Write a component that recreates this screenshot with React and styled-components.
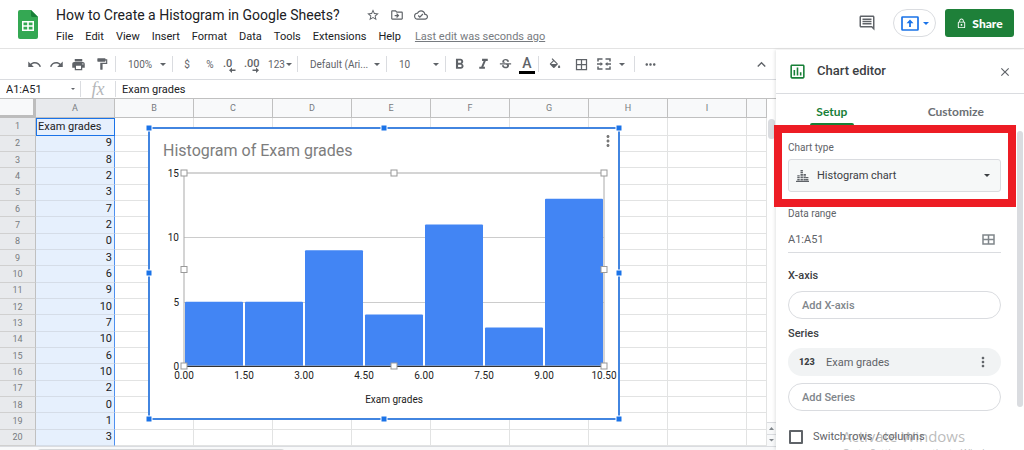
import React, { useState } from "react";
import styled, { createGlobalStyle } from "styled-components";
import {
  MdUndo,
  MdRedo,
  MdPrint,
  MdFormatPaint,
  MdFormatBold,
  MdFormatItalic,
  MdStrikethroughS,
  MdBorderAll,
  MdMoreHoriz,
  MdMoreVert,
  MdKeyboardArrowUp,
  MdStarBorder,
  MdOutlineDriveFileMove,
  MdOutlineCloudDone,
  MdOutlineComment,
  MdOutlineLock,
  MdClose,
  MdOutlineInsertChart,
} from "react-icons/md";

const GlobalStyle = createGlobalStyle`
  * {
    box-sizing: border-box;
  }
  body {
    margin: 0;
    background: #fff;
    color: #202124;
    font-family: Roboto, "Liberation Sans", sans-serif;
    overflow: hidden;
  }
  button, input, select {
    font: inherit;
    color: inherit;
    background: none;
    border: 0;
    margin: 0;
    padding: 0;
  }
  svg {
    display: block;
    flex: none;
  }
`;

const Page = styled.div`
  display: flex;
  flex-direction: column;
  height: 100vh;
`;

const Header = styled.header`
  display: flex;
  align-items: center;
  flex: none;
  height: 49px;
  padding: 0 10px 0 18px;
  border-bottom: 1px solid #e3e3e3;
`;

const Titles = styled.div`
  flex: 1;
  padding: 2px 0 0 18px;
`;

const TitleRow = styled.div`
  display: flex;
  align-items: center;
  gap: 10px;
  height: 22px;
  color: #5f6368;
`;

const Title = styled.h1`
  margin: 0 16px 0 0;
  font-size: 14px;
  font-weight: 400;
  color: #202124;
`;

const MenuBar = styled.nav`
  display: flex;
  align-items: center;
  gap: 12px;
  height: 20px;
  font-size: 11px;
`;

const LastEdit = styled.a`
  margin-left: 2px;
  font-size: 11px;
  color: #777b80;
  text-decoration: underline;
`;

const HeaderActions = styled.div`
  display: flex;
  align-items: center;
  padding-bottom: 2px;
  color: #5f6368;
`;

const PresentButton = styled.button`
  display: flex;
  align-items: center;
  justify-content: center;
  gap: 4px;
  width: 43px;
  height: 28px;
  margin: 0 9px 0 17px;
  border: 1px solid #dadce0;
  border-radius: 14px;
  color: #1a73e8;
`;

const ShareButton = styled.button`
  display: flex;
  align-items: center;
  justify-content: center;
  gap: 5px;
  width: 69px;
  height: 28px;
  border-radius: 3px;
  background: #1e8039;
  color: #fff;
  font-family: Lato, Roboto, sans-serif;
  font-size: 12px;
  font-weight: 900;
`;

const Body = styled.div`
  display: flex;
  flex: 1;
  min-height: 0;
`;

const Main = styled.main`
  display: flex;
  flex-direction: column;
  flex: 1;
  min-width: 0;
`;

const Toolbar = styled.div`
  display: flex;
  align-items: center;
  flex: none;
  height: 31px;
  padding: 0 6px 0 23px;
  border-bottom: 1px solid #dadce0;
  color: #5f6368;
  font-size: 10px;
`;

const Tool = styled.button`
  display: flex;
  align-items: center;
  justify-content: center;
  gap: 1px;
  flex: none;
  width: ${(props) => props.$width || 22}px;
  height: 24px;
`;

const Separator = styled.span`
  width: 1px;
  height: 16px;
  background: #dadce0;
`;

const Spacer = styled.span`
  flex: 1;
`;

const SelectBox = styled.label`
  display: flex;
  align-items: center;
  flex: none;
  width: ${(props) => props.$width}px;
  padding: 0 6px 0 12px;
`;

const Select = styled.select`
  appearance: none;
  flex: 1;
  min-width: 0;
  outline: none;
`;

const TextColor = styled.span`
  width: 16px;
  border-bottom: 3px solid #000;
  font-size: 14px;
  font-weight: 500;
  line-height: 16px;
`;

const FormulaBar = styled.div`
  display: flex;
  align-items: center;
  flex: none;
  height: 18px;
  font-size: 11px;
`;

const NameBox = styled.label`
  display: flex;
  align-items: center;
  width: 80px;
  padding: 0 5px 0 6px;
  color: #5f6368;
`;

const TextInput = styled.input`
  flex: 1;
  min-width: 0;
  color: ${(props) => props.$color || "#202124"};
  outline: none;
`;

const FormulaInput = styled(TextInput)`
  padding-left: 6px;
`;

const Fx = styled.span`
  width: 34px;
  text-align: center;
  font-family: "Liberation Serif", serif;
  font-style: italic;
  font-size: 18px;
  line-height: 16px;
  color: #b4b6b9;
`;

const SheetArea = styled.div`
  position: relative;
  display: flex;
  flex: 1;
  min-height: 0;
`;

const Sheet = styled.table`
  flex: 1;
  min-width: 0;
  height: 100%;
  table-layout: fixed;
  border-collapse: separate;
  border-spacing: 0;
  font-size: 11px;
  line-height: 12px;
  border-top: 1px solid #c0c0c0;
`;

const ColumnHead = styled.th`
  width: ${(props) => (props.$last ? "auto" : "79px")};
  height: 19px;
  padding: 0;
  border-right: 1px solid #c0c0c0;
  border-bottom: 1px solid #c0c0c0;
  background: ${(props) => (props.$active ? "#e8eaed" : "#f8f9fa")};
  color: #777b80;
  font-size: 9px;
  font-weight: 400;
`;

const Corner = styled.th`
  width: 36px;
  padding: 0;
  border-right: 3px solid #bdbdbd;
  border-bottom: 3px solid #bdbdbd;
  background: #f8f9fa;
`;

const RowHead = styled.th`
  padding: 0;
  border-right: 1px solid #c0c0c0;
  border-bottom: 1px solid #d0d0d0;
  background: #e8eaed;
  color: #777b80;
  font-size: 9px;
  font-weight: 400;
`;

const Cell = styled.td`
  padding: 0;
  border-right: 1px solid #e2e3e3;
  border-bottom: 1px solid #e2e3e3;
`;

const DataCell = styled(Cell)`
  padding: 0 2px;
  background: #e6f0fd;
  border-right-color: #4d90f0;
  border-bottom-color: #d5dde8;
  text-align: right;
`;

const LabelCell = styled(DataCell)`
  padding: 0 1px;
  border: 1px solid #1a73e8;
  text-align: left;
`;

const ChartFrame = styled.section`
  position: absolute;
  left: 148px;
  top: 29px;
  width: 472px;
  height: 293px;
  border: 2px solid #4285e0;
  background: #fff;
`;

const ChartMenu = styled.button`
  position: absolute;
  top: 3px;
  right: 1px;
  color: #777;
`;

const VerticalScroll = styled.div`
  display: flex;
  flex-direction: column;
  justify-content: space-between;
  flex: none;
  width: 9px;
  padding-top: 20px;
  border-top: 1px solid #c0c0c0;
  background: #fff;
`;

const ScrollThumb = styled.div`
  width: 7px;
  height: 20px;
  margin-left: 1px;
  border-radius: 4px;
  background: #dadce0;
`;

const ScrollButton = styled.button`
  display: flex;
  align-items: center;
  justify-content: center;
  width: 9px;
  height: 12px;
  border-top: 1px solid #dadce0;
  background: #f8f9fa;
  color: #80868b;
`;

const BottomScroll = styled.div`
  flex: none;
  height: 4px;
  padding: 2px 0 0 37px;
  border-top: 1px solid #dadce0;
  background: #f8f9fa;

  &::before {
    content: "";
    display: block;
    width: 248px;
    height: 4px;
    border-radius: 4px 4px 0 0;
    background: #d5d6d8;
  }
`;

const Panel = styled.aside`
  position: relative;
  flex: none;
  width: 248px;
  margin-top: 1px;
  background: #fff;
  box-shadow: -1px 0 3px rgba(60, 64, 67, 0.15);
  color: #3c4043;
`;

const PanelHeader = styled.div`
  display: flex;
  align-items: center;
  height: 44px;
  padding: 0 12px;
  border-bottom: 1px solid #dadce0;
  color: #5f6368;
`;

const PanelTitle = styled.h2`
  flex: 1;
  margin: 0 0 0 10px;
  padding-bottom: 2px;
  font-size: 13px;
  font-weight: 500;
  color: #3c4043;
`;

const Tabs = styled.div`
  display: flex;
  height: 31px;
`;

const Tab = styled.button`
  position: relative;
  width: ${(props) => (props.$active ? 45 : 55)}%;
  padding-top: 4px;
  font-family: Lato, Roboto, sans-serif;
  font-size: 12px;
  font-weight: 700;
  color: ${(props) => (props.$active ? "#188038" : "#6b6f74")};

  &::after {
    content: "";
    display: ${(props) => (props.$active ? "block" : "none")};
    position: absolute;
    left: calc(50% - 22px);
    bottom: 0;
    width: 44px;
    height: 2px;
    border-radius: 2px 2px 0 0;
    background: #188038;
  }
`;

const PanelBody = styled.div`
  display: flex;
  flex-direction: column;
  padding: 0 23px 0 12px;
  font-size: 11px;
`;

const Highlight = styled.div`
  margin: 0 -15px 0 -14px;
  padding: 8px 7px 7px 6px;
  border: 8px solid #ed1c24;
  z-index: 1;
`;

const FieldLabel = styled.label`
  display: block;
  height: 14px;
  font-size: 10px;
  line-height: 14px;
  color: #5f6368;
`;

const TypeSelect = styled.div`
  display: flex;
  align-items: center;
  gap: 8px;
  height: 33px;
  margin-top: 4px;
  padding: 0 10px 0 7px;
  border: 1px solid #dadce0;
  border-radius: 3px;
  background: #f6f8f8;
`;

const RangeField = styled.div`
  display: flex;
  align-items: center;
  height: 27px;
  margin: 5px 0 15px;
  padding-right: 6px;
  border-bottom: 1px solid #dadce0;
  color: #80868b;
`;

const GroupTitle = styled.h3`
  margin: 0;
  font-size: 11px;
  font-weight: 500;
  line-height: 16px;
`;

const Pill = styled.button`
  height: 28px;
  margin: 7px 0;
  padding: 0 13px;
  border: 1px solid #dadce0;
  border-radius: 14px;
  font-weight: 500;
  text-align: left;
  color: #80868b;
`;

const SeriesItem = styled.div`
  display: flex;
  align-items: center;
  height: 28px;
  margin-top: 6px;
  padding: 0 10px 0 11px;
  border-radius: 14px;
  background: #f1f3f4;
  color: #5f6368;
`;

const SeriesKind = styled.span`
  width: 27px;
  font-size: 9px;
  font-weight: 900;
  color: #3c4043;
`;

const SeriesName = styled.span`
  flex: 1;
`;

const CheckRow = styled.label`
  display: flex;
  align-items: center;
  gap: 10px;
  margin-top: 12px;
  line-height: 14px;
  color: #5f6368;
`;

const Checkbox = styled.input`
  appearance: none;
  width: 14px;
  height: 14px;
  margin-left: 1px;
  border: 2px solid #5f6368;
  border-radius: 1px;
`;

const PanelScroll = styled.div`
  position: absolute;
  top: 81px;
  right: 1px;
  width: 6px;
  height: 276px;
  border-radius: 3px;
  background: #dadce0;
`;

const Watermark = styled.div`
  position: absolute;
  left: 66px;
  top: 376px;
  font-family: "Open Sans", sans-serif;
  font-size: 15px;
  line-height: 20px;
  color: rgba(120, 120, 120, 0.5);
  pointer-events: none;
  white-space: nowrap;

  small {
    display: block;
    font-size: 10px;
    line-height: 14px;
  }
`;

const menus = ["File", "Edit", "View", "Insert", "Format", "Data", "Tools", "Extensions", "Help"];
const columns = ["A", "B", "C", "D", "E", "F", "G", "H", "I", ""];
const grades = [9, 8, 2, 3, 7, 2, 0, 3, 6, 9, 10, 7, 10, 6, 10, 2, 0, 1, 3];
const bins = [5, 5, 9, 4, 11, 3, 13];

const Caret = ({ size = 6 }) => (
  <svg width={size} height={size / 2} viewBox="0 0 6 3" fill="currentColor">
    <path d="M0 0h6L3 3z" />
  </svg>
);

const SheetsLogo = () => (
  <svg width="20" height="29" viewBox="0 0 20 29">
    <path d="M2 0h11l7 7v20a2 2 0 0 1-2 2H2a2 2 0 0 1-2-2V2a2 2 0 0 1 2-2z" fill="#34a853" />
    <path d="M13 0l7 7h-5.500a1.500 1.500 0 0 1-1.500-1.500z" fill="#188038" />
    <path
      d="M4 11h12v10H4zM5.500 12.500v2.700h3.700v-2.700zM10.800 12.500v2.700h3.700v-2.700zM5.500 16.800v2.700h3.700v-2.700zM10.800 16.800v2.700h3.700v-2.700z"
      fill="#fff"
      fillRule="evenodd"
    />
  </svg>
);

const PresentIcon = () => (
  <svg width="18" height="15" viewBox="0 0 18 15">
    <rect x="1" y="1" width="16" height="13" rx="0.500" fill="none" stroke="currentColor" strokeWidth="1.700" />
    <path d="M9 3.500l3.500 3.700h-2.600V11H8.100V7.200H5.500z" fill="currentColor" />
  </svg>
);

const FillIcon = () => (
  <svg width="14" height="14" viewBox="0 -2 24 24" fill="currentColor">
    <path d="M16.560 8.940L7.620 0 6.210 1.410l2.380 2.380-5.150 5.150c-.590.590-.590 1.540 0 2.120l5.500 5.500c.290.290.680.440 1.060.440s.770-.150 1.060-.440l5.500-5.500c.590-.580.590-1.530 0-2.120zM5.210 10L10 5.210 14.790 10H5.210zM19 11.500s-2 2.170-2 3.500c0 1.100.900 2 2 2s2-.900 2-2c0-1.330-2-3.500-2-3.500z" />
  </svg>
);

const MergeIcon = () => (
  <svg width="14" height="12" viewBox="0 0 14 12" fill="none" stroke="currentColor" strokeWidth="1.500">
    <path d="M5.500 1H1v2.500M8.500 1H13v2.500M5.500 11H1V8.500M8.500 11H13V8.500M0 6h4.500M14 6H9.500" />
    <path d="M3.500 4L6 6 3.500 8zM10.500 4L8 6l2.500 2z" fill="currentColor" stroke="none" />
  </svg>
);

const DecimalIcon = ({ text, more }) => (
  <svg width="16" height="18" viewBox="0 0 16 18" fill="currentColor">
    <text x={more ? 0 : 1} y="12" fontSize="11" fontWeight="500">{text}</text>
    <path
      d={more ? "M8.500 14.500H12v-2l3 2.700-3 2.700v-2H8.500z" : "M13.500 14.500H10v-2l-3 2.700 3 2.700v-2h3.500z"}
    />
  </svg>
);

const HistogramIcon = () => (
  <svg width="13" height="12" viewBox="0 0 13 12" fill="none" stroke="#5f6368" strokeDasharray="1.700 0.700">
    <path d="M2.500 10.500V5M5.700 10.500V0M8.700 10.500V4M11.200 10.500V7" strokeWidth="2.400" />
    <path d="M0 11.400h13" strokeWidth="1.200" strokeDasharray="none" />
  </svg>
);

const RangeIcon = () => (
  <svg width="13" height="11" viewBox="0 0 13 11" fill="none" stroke="currentColor" strokeWidth="1.500">
    <path d="M1 1h11v9H1zM6.500 1v9M1 5.500h11" />
  </svg>
);

// coordinates are relative to the inside of the chart frame
const plot = { x: 34, y: 44, width: 420, height: 193 };
const yOf = (value) => plot.y + plot.height - (value * plot.height) / 15;

const Handles = ({ xs, ys, fill, stroke, size }) =>
  xs.flatMap((x, i) =>
    ys.map((y, j) =>
      i === 1 && j === 1 ? null : (
        <rect
          key={`${x}-${y}`}
          x={x - size / 2}
          y={y - size / 2}
          width={size}
          height={size}
          fill={fill}
          stroke={stroke}
        />
      )
    )
  );

const Histogram = () => {
  const right = plot.x + plot.width;
  const bottom = plot.y + plot.height;
  const step = plot.width / bins.length;
  return (
    <svg
      width="468"
      height="288"
      overflow="visible"
      fontSize="10"
      fontFamily="Roboto, sans-serif"
      fill="#222"
      role="img"
      aria-label="Histogram of Exam grades"
    >
      <text x="13" y="27" fontSize="16" fill="#7d7d7d">Histogram of Exam grades</text>
      {[5, 10].map((v) => (
        <path key={v} d={`M${plot.x} ${Math.round(yOf(v)) + 0.5}h${plot.width}`} stroke="#ccc" />
      ))}
      {[0, 5, 10, 15].map((v) => (
        <text key={v} x={plot.x - 5} y={yOf(v) + 4} textAnchor="end">{v}</text>
      ))}
      {bins.map((count, i) => (
        <path
          key={i}
          d={`M${plot.x + i * step + 1} ${bottom}V${yOf(count) + 1}q0-1 1-1h${step - 4}q1 0 1 1V${bottom}z`}
          fill="#4285f4"
        />
      ))}
      <rect x={plot.x} y={plot.y} width={plot.width} height={plot.height} fill="none" stroke="#aaa" />
      <path d={`M${plot.x} ${bottom + 0.5}h${plot.width}`} stroke="#333" />
      {bins.concat(0).map((_, i) => (
        <text key={i} x={plot.x + i * step} y={bottom + 13} textAnchor="middle">
          {(i * 1.5).toFixed(2)}
        </text>
      ))}
      <text x={plot.x + plot.width / 2} y="274" textAnchor="middle">Exam grades</text>
      <Handles
        xs={[plot.x, plot.x + plot.width / 2, right]}
        ys={[plot.y, plot.y + plot.height / 2, bottom]}
        fill="#fff"
        stroke="#999"
        size={6}
      />
      <Handles xs={[-1, 234, 469]} ys={[-1, 144, 290]} fill="#1a73e8" stroke="#fff" size={6} />
    </svg>
  );
};

const Spreadsheet = () => (
  <SheetArea>
    <Sheet>
      <thead>
        <tr>
          <Corner aria-label="Select all" />
          {columns.map((name, i) => (
            <ColumnHead key={i} $active={i === 0} $last={i === columns.length - 1}>{name}</ColumnHead>
          ))}
        </tr>
      </thead>
      <tbody>
        {["Exam grades", ...grades].map((value, row) => (
          <tr key={row}>
            <RowHead>{row + 1}</RowHead>
            {row === 0 ? <LabelCell>{value}</LabelCell> : <DataCell>{value}</DataCell>}
            {columns.slice(1).map((_, i) => (
              <Cell key={i} />
            ))}
          </tr>
        ))}
      </tbody>
    </Sheet>
    <VerticalScroll>
      <ScrollThumb />
      <div>
        <ScrollButton aria-label="Scroll up">
          <svg width="5" height="3" fill="currentColor"><path d="M0 3h5L2.500 0z" /></svg>
        </ScrollButton>
        <ScrollButton aria-label="Scroll down"><Caret size={5} /></ScrollButton>
      </div>
    </VerticalScroll>
    <ChartFrame>
      <Histogram />
      <ChartMenu aria-label="Chart menu"><MdMoreVert size={18} /></ChartMenu>
    </ChartFrame>
  </SheetArea>
);

const ChartEditor = () => {
  const [switched, setSwitched] = useState(false);
  const [range, setRange] = useState("A1:A51");
  return (
    <Panel>
      <PanelHeader>
        <MdOutlineInsertChart size={19} color="#188038" />
        <PanelTitle>Chart editor</PanelTitle>
        <button aria-label="Close"><MdClose size={14} /></button>
      </PanelHeader>
      <Tabs>
        <Tab $active>Setup</Tab>
        <Tab>Customize</Tab>
      </Tabs>
      <PanelBody>
        <Highlight>
          <FieldLabel htmlFor="chart-type">Chart type</FieldLabel>
          <TypeSelect>
            <HistogramIcon />
            <Select id="chart-type">
              <option>Histogram chart</option>
            </Select>
            <Caret />
          </TypeSelect>
        </Highlight>
        <FieldLabel htmlFor="data-range">Data range</FieldLabel>
        <RangeField>
          <TextInput
            id="data-range"
            $color="#5f6368"
            value={range}
            onChange={(event) => setRange(event.target.value)}
          />
          <RangeIcon />
        </RangeField>
        <GroupTitle>X-axis</GroupTitle>
        <Pill>Add X-axis</Pill>
        <GroupTitle>Series</GroupTitle>
        <SeriesItem>
          <SeriesKind>123</SeriesKind>
          <SeriesName>Exam grades</SeriesName>
          <button aria-label="Series options"><MdMoreVert size={16} /></button>
        </SeriesItem>
        <Pill>Add Series</Pill>
        <CheckRow>
          <Checkbox type="checkbox" checked={switched} onChange={() => setSwitched(!switched)} />
          Switch rows / columns
        </CheckRow>
      </PanelBody>
      <PanelScroll />
      <Watermark>
        Activate Windows
        <small>Go to Settings to activate Windows</small>
      </Watermark>
    </Panel>
  );
};

const App = () => {
  const [formula, setFormula] = useState("Exam grades");
  const [selection, setSelection] = useState("A1:A51");

  return (
    <Page>
      <GlobalStyle />
      <Header>
        <SheetsLogo />
        <Titles>
          <TitleRow>
            <Title>How to Create a Histogram in Google Sheets?</Title>
            <MdStarBorder size={14} />
            <MdOutlineDriveFileMove size={14} />
            <MdOutlineCloudDone size={14} />
          </TitleRow>
          <MenuBar>
            {menus.map((menu) => (
              <button key={menu}>{menu}</button>
            ))}
            <LastEdit href="#history">Last edit was seconds ago</LastEdit>
          </MenuBar>
        </Titles>
        <HeaderActions>
          <button aria-label="Comments"><MdOutlineComment size={18} /></button>
          <PresentButton aria-label="Present"><PresentIcon /><Caret size={6} /></PresentButton>
          <ShareButton><MdOutlineLock size={11} />Share</ShareButton>
        </HeaderActions>
      </Header>
      <Body>
        <Main>
          <Toolbar>
            <Tool aria-label="Undo"><MdUndo size={15} /></Tool>
            <Tool aria-label="Redo"><MdRedo size={15} /></Tool>
            <Tool aria-label="Print"><MdPrint size={15} /></Tool>
            <Tool aria-label="Paint format" $width={26}><MdFormatPaint size={14} /></Tool>
            <Separator />
            <SelectBox $width={56}>
              <Select aria-label="Zoom"><option>100%</option></Select>
              <Caret />
            </SelectBox>
            <Separator />
            <Tool $width={28}>$</Tool>
            <Tool $width={18}>%</Tool>
            <Tool aria-label="Decrease decimal places"><DecimalIcon text=".0" /></Tool>
            <Tool aria-label="Increase decimal places"><DecimalIcon text=".00" more /></Tool>
            <Tool $width={34}>123<Caret /></Tool>
            <Separator />
            <SelectBox $width={88}>
              <Select aria-label="Font"><option>Default (Ari...</option></Select>
              <Caret />
            </SelectBox>
            <Separator />
            <SelectBox $width={58}>
              <Select aria-label="Font size"><option>10</option></Select>
              <Caret />
            </SelectBox>
            <Separator />
            <Tool aria-label="Bold" $width={26}><MdFormatBold size={17} /></Tool>
            <Tool aria-label="Italic"><MdFormatItalic size={17} /></Tool>
            <Tool aria-label="Strikethrough"><MdStrikethroughS size={15} /></Tool>
            <Tool aria-label="Text color"><TextColor>A</TextColor></Tool>
            <Separator />
            <Tool aria-label="Fill color" $width={32}><FillIcon /></Tool>
            <Tool aria-label="Borders" $width={20}><MdBorderAll size={15} /></Tool>
            <Tool aria-label="Merge cells" $width={26}><MergeIcon /></Tool>
            <Tool aria-label="Merge options" $width={10}><Caret /></Tool>
            <Tool as="span" $width={14}><Separator /></Tool>
            <Tool aria-label="More" $width={18}><MdMoreHoriz size={15} /></Tool>
            <Spacer />
            <Tool aria-label="Hide menus" $width={18}><MdKeyboardArrowUp size={17} /></Tool>
          </Toolbar>
          <FormulaBar>
            <NameBox>
              <TextInput
                aria-label="Name box"
                value={selection}
                onChange={(event) => setSelection(event.target.value)}
              />
              <Caret size={4} />
            </NameBox>
            <Separator />
            <Fx>fx</Fx>
            <Separator />
            <FormulaInput
              aria-label="Formula"
              value={formula}
              onChange={(event) => setFormula(event.target.value)}
            />
          </FormulaBar>
          <Spreadsheet />
          <BottomScroll />
        </Main>
        <ChartEditor />
      </Body>
    </Page>
  );
};

export default App;
